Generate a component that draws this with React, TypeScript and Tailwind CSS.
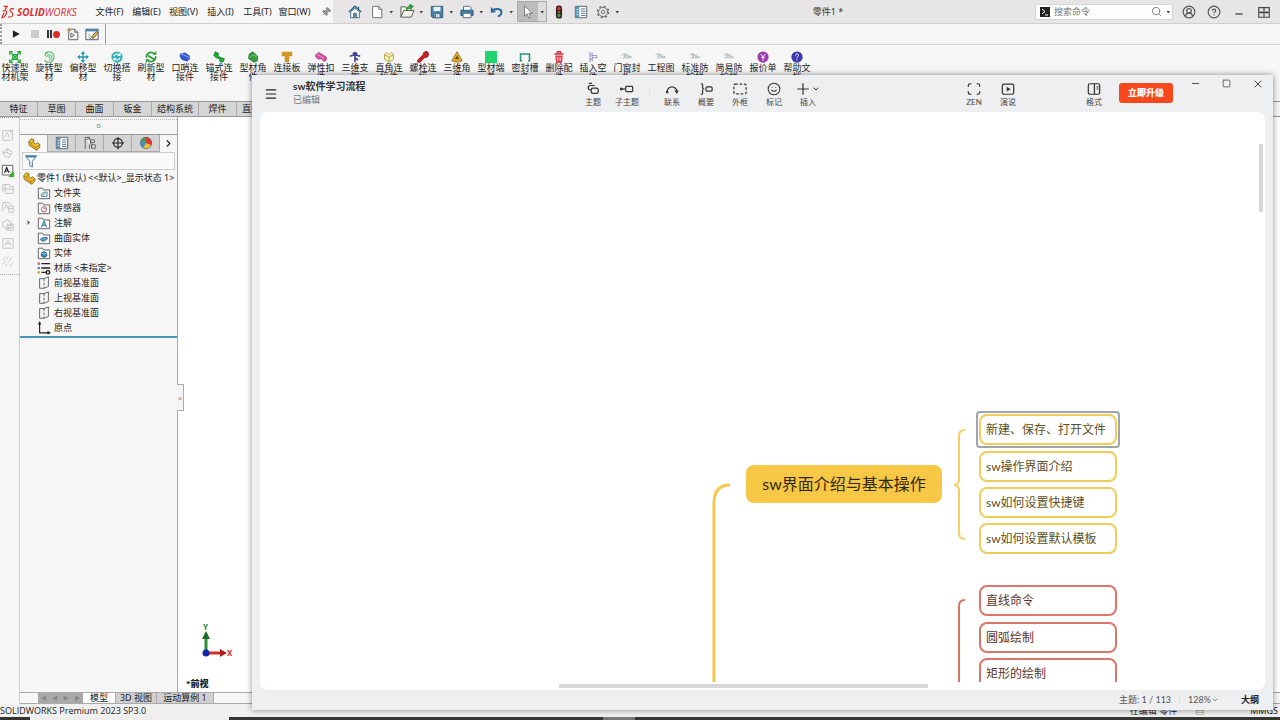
import type { ReactNode } from 'react';
import clsx from 'clsx';
import { ChevronDown, ChevronRight, CircleHelp, CircleUserRound, Menu, Minus, Pin, Search, Smile, Square, X } from 'lucide-react';

const menus = ['文件(F)', '编辑(E)', '视图(V)', '插入(I)', '工具(T)', '窗口(W)'];

const Ico = ({ children, className = 'size-[14px]' }: { children: ReactNode; className?: string }) => (
  <svg viewBox="0 0 16 16" fill="none" className={className} aria-hidden="true">{children}</svg>
);

const icons = {
  home: <Ico><path d="M1 8 8 1.5 15 8" stroke="#2b6488" strokeWidth="1.6" /><path d="M3 8v6.5h10V8L8 3.5Z" fill="#f7f9fa" stroke="#37627c" /><path d="M6.5 14V9.5h3V14" fill="#5d95b5" stroke="#37627c" /><path d="M12 2v3" stroke="#37627c" strokeWidth="1.5" /></Ico>,
  file: <Ico><path d="M3 1.5h7l3.5 3.5v9.5H3Z" fill="#fff" stroke="#666" /><path d="M10 1.5V5h3.5" stroke="#666" /></Ico>,
  open: <Ico className="size-[15px]"><path d="M1 14V3h5l1 2h5v3" fill="#f5f1de" stroke="#555" /><path d="m1 14 3-7h11l-3 7Z" fill="#f7f5e8" stroke="#555" /><path d="M7 7c0-3 2-4.5 5-4.5M10 .5l3.5 2-3 2.5" stroke="#2e9b3b" strokeWidth="1.8" /></Ico>,
  save: <Ico><path d="M1.5 1.5h13v13H3l-1.5-1.5Z" fill="#4384ad" stroke="#28516c" /><path d="M4 2h8v5H4Z" fill="#e9f1f5" /><path d="M4.5 10h7v4.5h-7Z" fill="#dbe3e8" stroke="#28516c" strokeWidth=".7" /><path d="M6 11v3" stroke="#28516c" strokeWidth="1.5" /></Ico>,
  print: <Ico><path d="M4 6V1.5h7L12.5 3v3" fill="#fff" stroke="#4b5b66" /><path d="M1 6h14v6H1Z" fill="#3f82aa" stroke="#2a5a78" /><path d="M3.5 9.5h9v5h-9Z" fill="#fff" stroke="#4b5b66" /></Ico>,
  undo: <Ico><path d="M3 6c5-3 11-1 10 3-.3 2-2 3.5-4 4" stroke="#2c6da0" strokeWidth="2.2" /><path d="M1 2v7l6-1Z" fill="#2c6da0" /></Ico>,
  cursor: <Ico><path d="M4 1v12l3-3 2 5 2-1-2-4.5h4Z" fill="#fff" stroke="#555" strokeWidth=".8" /></Ico>,
  traffic: <Ico><rect x="4.5" y=".5" width="7" height="15" rx="3" fill="#3a2222" /><circle cx="8" cy="4" r="2" fill="#d83b2c" /><circle cx="8" cy="8" r="1.5" fill="#8c6a24" /><circle cx="8" cy="12" r="2" fill="#37a544" /></Ico>,
  list: <Ico><path d="M1.5 1.5h13v13h-13Z" fill="#fff" stroke="#456" /><path d="M2 2h4v12H2Z" fill="#5593b5" /><path d="M3 5h2M3 8h2M3 11h2" stroke="#fff" /><path d="M8 4.5h5M8 7h5M8 9.5h5M8 12h5" stroke="#567" /></Ico>,
  gear: <Ico><circle cx="8" cy="8" r="5.2" stroke="#666" /><circle cx="8" cy="8" r="6.4" stroke="#666" strokeWidth="1.6" strokeDasharray="2.5 2.53" /><circle cx="8" cy="8" r="2" stroke="#666" /></Ico>,
  part: <Ico><path d="M2 5.5 5 2l3 1.5-.5 3L10 8l2-1.5L15 9l-1 3.5-3 2.5-8.500-5.500Z" fill="#f0bf2c" stroke="#876616" /><path d="m2 5.5 3 1.500.5 2L10 12l1 3M5 7l3-3.500M10 12l4.500-3" stroke="#876616" strokeWidth=".7" /></Ico>,
  config: <Ico><path d="M2.5 14.500v-13h5v13" stroke="#555" /><path d="m4 4 4-1 2 11M9 4.500h4v3H9ZM10 10h4v4h-4Z" fill="#eee" stroke="#555" /></Ico>,
  target: <Ico><circle cx="8" cy="8" r="5" stroke="#222" strokeWidth="1.3" /><path d="M8 1v14M1 8h14" stroke="#222" strokeWidth="1.3" /></Ico>,
  ball: <Ico><circle cx="8" cy="8" r="6.5" fill="#438dc5" /><path d="M8 8 2 5.5A6.5 6.5 0 0 1 8 1.5Z" fill="#3ba34a" /><path d="M8 8V1.5A6.5 6.5 0 0 1 14 10.5Z" fill="#d93530" /><path d="m8 8 6 2.5A6.5 6.5 0 0 1 5 13.8Z" fill="#efc434" /><circle cx="8" cy="8" r="6.5" stroke="#555" strokeWidth=".6" /></Ico>,
  filter: <Ico><path d="M1.5 2h13l-5 6.5V15l-3-2V8.5Z" fill="#f7fafb" stroke="#3c6b83" /><path d="M2 2h12l-1.5 2h-9Z" fill="#4284a7" /></Ico>,
  material: <Ico><path d="M5 3h10M5 8h10M5 13h5" stroke="#222" strokeWidth="1.5" /><circle cx="2" cy="3" r="1.5" fill="#b9707c" /><circle cx="2" cy="8" r="1.5" fill="#5978c4" /><circle cx="2" cy="13" r="1.5" fill="#d7a93b" /><circle cx="12.5" cy="13" r="2" stroke="#222" strokeWidth="1.7" /></Ico>,
  plane: <Ico><path d="M8 3H3v11h5M8 3l5-2v11l-5 2" stroke="#555" /><path d="M8 3v11" stroke="#555" strokeDasharray="3 1.500" /></Ico>,
  origin: <Ico><path d="M3 3v10.5h11" stroke="#222" strokeWidth="1.3" /><path d="M3 0 1 4h4ZM16 13.500l-4-2v4Z" fill="#222" /></Ico>,
  macroDoc: <Ico><path d="M3 2.5h7L13.5 6v8.5H3Z" fill="#f5f5f5" stroke="#555" /><path d="M10 2.5V6h3.5M5.5 7v5l4-2.5Z" stroke="#555" /><path d="m3.5 0 1 2.5 2.5 1-2.5 1-1 2.5-1-2.5L0 3.500l2.500-1Z" fill="#b69458" /></Ico>,
  macroEdit: <Ico><path d="M1 2.5h14v12H1Z" fill="#fff" stroke="#445" /><path d="M1 2.5h14V5H1Z" fill="#4485ad" /><path d="m4 8 5 5M4 11l3 3" stroke="#5a7188" /><path d="m8 13 .5-3L13 5l2 2-4.500 5Z" fill="#e4b258" stroke="#715427" /></Ico>,
};

// folders in the feature tree share a body and only differ in the badge
const FolderIcon = ({ children }: { children: ReactNode }) => (
  <Ico><path d="M1.5 14.5v-12h5l1 2h7v10Z" fill="#f7f7f7" stroke="#555" />{children}</Ico>
);

const tree = [
  { label: '文件夹', icon: <FolderIcon><path d="M5 12V9l3-2h3.5v5H5M6 11l4-3" stroke="#3b8c92" /></FolderIcon> },
  { label: '传感器', icon: <FolderIcon><circle cx="8" cy="9.5" r="3" stroke="#a04a55" /><path d="M8 9.500 9.500 8" stroke="#333" /></FolderIcon> },
  { label: '注解', icon: <FolderIcon><path d="m5 13 3-7 3 7M6 10.5h4" stroke="#2d81a0" strokeWidth="1.3" /></FolderIcon>, open: true },
  { label: '曲面实体', icon: <FolderIcon><path d="M4 10c2-4 3-1 5-3l3 1c-2 4-3 2-5 4Z" fill="#5aa5c8" stroke="#235f85" /></FolderIcon> },
  { label: '实体', icon: <FolderIcon><path d="m5 8 3-1.5L11 8v3.500L8 13l-3-1.500Z" fill="#3288b7" stroke="#17516e" /><path d="m5 8 3 1.500L11 8" stroke="#fff" strokeWidth=".7" /></FolderIcon> },
  { label: '材质 <未指定>', icon: icons.material },
  { label: '前视基准面', icon: icons.plane },
  { label: '上视基准面', icon: icons.plane },
  { label: '右视基准面', icon: icons.plane },
  { label: '原点', icon: icons.origin },
];

const sketchy = <path d="M1 6c3-5 4-2 3 1M4 4h3v3H4M8 7.5h6M2 9h12M5 5.5h6" stroke="#9aa8a5" strokeWidth=".9" />;

const ribbon = [
  { label: '快速型材机架', icon: <><path d="m2 2 12 12M14 2 2 14" stroke="#23ad3c" strokeWidth="1.5" /><path d="M1 5V1h4M11 1h4v4M1 11v4h4M11 15h4v-4M5 5h6v6H5Z" stroke="#23ad3c" strokeWidth="1.8" /></> },
  { label: '旋转型材', icon: <><path d="M3 3a7 7 0 1 1-1 9M3 3v4M3 3h4" stroke="#43ba5e" strokeWidth="1.4" /><path d="M5 8a3.5 3.5 0 1 1 3 4M8 6v3h2" stroke="#43ba5e" strokeWidth="1.3" /></> },
  { label: '偏移型材', icon: <><path d="M8 2v12M2 8h12" stroke="#2699b0" strokeWidth="1.8" /><path d="M8 0 5 4h6ZM8 16l-3-4h6ZM0 8l4-3v6ZM16 8l-4-3v6Z" fill="#2699b0" /></> },
  { label: '切换搭接', icon: <><circle cx="8" cy="8" r="7.5" fill="#35b5bb" /><path d="M4 7a4.5 4.5 0 0 1 8-1M12 9a4.5 4.5 0 0 1-8 1M12 3v3H9M4 13v-3h3" stroke="#fff" strokeWidth="1.5" /></> },
  { label: '刷新型材', icon: <><path d="M2 9a6 6 0 0 1 10-5.5M14 7A6 6 0 0 1 4 12.5M4 6l8 5" stroke="#279c35" strokeWidth="2.2" /><path d="M10 5h5V0ZM6 11H1v5Z" fill="#279c35" /></> },
  { label: '口哨连接件', icon: <><path d="M1 4 8 2l6 4 1 4-4 4-7-2-3-4Z" fill="#3556c9" /><path d="m2 4 6 2 6 3" stroke="#849af0" strokeWidth="1.5" /></> },
  { label: '锚式连接件', icon: <path d="m3 1 4 2v4l4 2 4 1-1 4-4 1-2-5-4-1-3-3Z" fill="#22ab37" stroke="#167726" /> },
  { label: '型材角件', icon: <><path d="m3 4 5-3 6 6v6l-5 2-7-5Z" fill="#2f9d40" stroke="#236c30" /><path d="m3 9 5-4 5 3" stroke="#91cc93" /></> },
  { label: '连接板', icon: <path d="M1 1h14v6h-4v8H5V7H1Z" fill="#cf9927" /> },
  { label: '弹性扣件', icon: <><path d="m1 5 4-3 10 6v4l-3 2-4-4-3 1-4-3Z" fill="#d855a6" stroke="#90386e" /><path d="m3 4 9 6" stroke="#f9a4d5" /></> },
  { label: '三维支架', icon: <path d="M8 2v13M1 7l7-2 7 2M5 4l3-2 3 2M8 9l4 3" stroke="#4a438d" strokeWidth="2.2" /> },
  { label: '直角连接件', icon: <><path d="m2 4 3-2 3 3 3-3 3 2v7l-6 4-6-4Z" fill="#f5edb6" stroke="#a99536" /><path d="m2 5 6 3 6-3M8 8v7" stroke="#a99536" /></> },
  { label: '螺栓连接', icon: <path d="m1 12 7-7 1-3 4-2 3 4-2 4-4 1-6 6-3 0Z" fill="#c81f2b" stroke="#7b131b" /> },
  { label: '三维角件', icon: <><path d="M8 1 15 13l-7 2-7-2Z" fill="#e3ad2b" stroke="#8a6317" /><path d="m8 6 3 5H5Z" fill="#6f5219" /></> },
  { label: '型材端盖', icon: <path d="M0 0h16v16H0Z" fill="#22d46f" /> },
  { label: '密封槽条', icon: <path d="M4 13H2V4h12v9h-2" stroke="#25917d" strokeWidth="2" /> },
  { label: '删除配件', icon: <><path d="M2 4h12M6 3V1h4v2" stroke="#ce3144" strokeWidth="2" /><path d="M3 6h10l-1 10H4Z" fill="#d94253" /><path d="M6.5 8v5M9.5 8v5" stroke="#fff" /></> },
  { label: '插入空件', icon: <path d="M4 1v14M7 2v12M7 6h6v3H7M4 5h3M4 11h3" stroke="#a79ac5" strokeWidth="1.5" /> },
  { label: '门窗封板', icon: sketchy },
  { label: '工程图', icon: sketchy },
  { label: '标准防护栏', icon: sketchy },
  { label: '简易防护栏', icon: sketchy },
  { label: '报价单', icon: <><circle cx="8" cy="8" r="7.5" fill="#9d3cae" /><path d="m5 4 3 4 3-4M8 8v5M5.5 8.5h5" stroke="#fff" strokeWidth="1.2" /></> },
  { label: '帮助文档', icon: <><circle cx="8" cy="8" r="7.5" fill="#3a38ad" /><path d="M6 6c0-3 4.5-2.500 4 0-.2 1.300-2 1.500-2 3.500M8 11v1.500" stroke="#fff" strokeWidth="1.3" /></> },
];

const sideIcons = [
  <><path d="M2 3h11v11H2ZM4 11l3-6 3 6" /><path d="m10 5 4-3" /></>,
  <><path d="m2 7 5-4 6 4-4 6-5-1ZM7 3v5l5 2M2 7l5 1" /></>,
  null,
  <><path d="M2 12V3h8M5 3v9M2 8h12M9 5h5v8H5" /></>,
  <><path d="M2 13V3h7l3 3M4 10l2-5 2 5M9 7h5v7H9ZM9 10h5" /></>,
  <><path d="m2 5 5-3 5 3v5l-5 3-5-3ZM7 7h7v7H7Z" /><circle cx="10" cy="10" r="2" /></>,
  <><path d="M2 3h12v11H2ZM4 11l4-6 4 6M5 9h6" /></>,
  <><path d="m2 12 7-10M5 14l8-11M10 14l4-5M2 7l3-4" strokeDasharray="3 1" /></>,
];

const mindTools = [
  { label: '主题', icon: <><path d="M10 4H5a2.5 2.5 0 0 0 0 5h1" /><rect x="6" y="7" width="8" height="6" rx="2" /><path d="M3 1.5h4" /></> },
  { label: '子主题', icon: <><circle cx="1.500" cy="8" r="1" fill="currentColor" /><path d="M2 8h4" /><rect x="6.5" y="5" width="8" height="6" rx="1" /></> },
];
const mindTools2 = [
  { label: '联系', icon: <><path d="M2.500 11a5.500 5.500 0 1 1 11 0" /><circle cx="2.500" cy="11.500" r=".8" fill="currentColor" /><path d="m12 10.500 1.500 2 1-2Z" fill="currentColor" /></> },
  { label: '概要', icon: <><path d="M2 2c3 0 2 1 2 4 0 1.5 1 2 2 2-1 0-2 .5-2 2 0 3 1 4-2 4" /><rect x="8" y="5.5" width="7" height="5" rx="1.5" /></> },
  { label: '外框', icon: <rect x="1" y="2.5" width="14" height="11" rx="1.5" strokeDasharray="3 2" /> },
];
const viewTools = [
  { label: 'ZEN', icon: <path d="M1.5 5.5V4a2 2 0 0 1 2-2H5M11 2h1.5a2 2 0 0 1 2 2v1.5M14.5 10.5V12a2 2 0 0 1-2 2H11M5 14H3.5a2 2 0 0 1-2-2v-1.5" /> },
  { label: '演说', icon: <><rect x="1.5" y="2.5" width="13" height="11.5" rx="2" /><path d="m6.5 5.5 4.5 2.7-4.5 2.7Z" fill="currentColor" stroke="none" /></> },
];

const yellowTopics = [
  { text: '新建、保存、打开文件', pos: 'top-[302px]', selected: true },
  { text: 'sw操作界面介绍', pos: 'top-[339px]' },
  { text: 'sw如何设置快捷键', pos: 'top-[375px]' },
  { text: 'sw如何设置默认模板', pos: 'top-[411px]' },
];
const redTopics = [
  { text: '直线命令', pos: 'top-[473px]' },
  { text: '圆弧绘制', pos: 'top-[510px]' },
  { text: '矩形的绘制', pos: 'top-[546px]' },
];

function Caret() {
  return <svg viewBox="0 0 8 8" className="size-[8px] shrink-0" aria-hidden="true"><path d="M2.5 3H6L4.250 5.500Z" fill="#444" /></svg>;
}

function TopButton({ icon, label, caret }: { icon: ReactNode; label: string; caret?: boolean }) {
  return (
    <button aria-label={label} className="flex items-center">
      <span className="flex w-5 justify-center">{icon}</span>
      {caret && <Caret />}
    </button>
  );
}

function MindTool({ label, children }: { label: string; children: ReactNode }) {
  return (
    <button className="flex w-[34px] flex-col items-center gap-px text-[8px] leading-[10px] text-[#444]">
      <span className="flex h-[14px] items-center justify-center text-[#333]">{children}</span>
      {label}
    </button>
  );
}

function LineIcon({ children }: { children: ReactNode }) {
  return <svg viewBox="0 0 16 16" fill="none" stroke="currentColor" strokeWidth="1.4" className="size-[14px]" aria-hidden="true">{children}</svg>;
}

function TitleBar() {
  return (
    <header className="flex h-6 shrink-0 border-b border-[#cfcfcf] bg-[#e7e5e6]">
      <div className="flex w-[333px] shrink-0 items-center bg-[#f6f6f6]">
        <div className="flex w-[91px] items-center gap-[2px] pl-px text-[#d5312f]">
          <svg viewBox="0 0 16 16" fill="none" stroke="currentColor" strokeWidth="1.4" className="size-[14px]" aria-hidden="true">
            <path d="M3 1.5h4l-2.500 4M2 7c5-2 5 1 3.500 4C4.500 13.500 3 14.500 1 14.500L3.500 9M15 4.500c-3-1-5 0-4.500 2 .5 2 4 2.500 3 5-.6 2-3 2.500-5.500 2" />
          </svg>
          <span className="font-['Open_Sans'] text-[10px] italic leading-4"><b>SOLID</b>WORKS</span>
        </div>
        <nav className="flex">
          {menus.map(m => <button key={m} className="w-[37px] whitespace-nowrap text-center text-[9px] leading-4">{m}</button>)}
        </nav>
        <button aria-label="固定" className="ml-2 text-[#777]"><Pin size={10} className="rotate-45" fill="#999" /></button>
      </div>
      <div className="ml-3 flex items-center gap-[2px]">
        <TopButton icon={icons.home} label="主页" />
        <TopButton icon={icons.file} label="新建" caret />
        <TopButton icon={icons.open} label="打开" caret />
        <TopButton icon={icons.save} label="保存" caret />
        <TopButton icon={icons.print} label="打印" caret />
        <TopButton icon={icons.undo} label="撤销" caret />
        <button aria-label="选择" className="flex h-[21px] items-center border border-[#aaa] bg-[#dcdcdc]">
          <span className="flex h-full w-5 items-center justify-center bg-[#bcbcbc]">{icons.cursor}</span>
          <Caret />
        </button>
        <TopButton icon={icons.traffic} label="重建模型" />
        <TopButton icon={icons.list} label="文件属性" />
        <TopButton icon={icons.gear} label="选项" caret />
      </div>
      <h1 className="flex flex-1 items-center justify-center text-[9px] leading-4 text-[#333]">零件1 *</h1>
      <div className="flex items-center">
        <label className="mr-[3px] flex h-4 w-[138px] items-center border border-[#d5d5d5] bg-white pl-1">
          <svg viewBox="0 0 10 10" className="size-[10px] shrink-0" aria-hidden="true"><path d="M0 0h10v10H0Z" fill="#222" /><path d="m2 2 3 2.5L2 7M5 8h3" stroke="#fff" fill="none" /></svg>
          <input aria-label="搜索命令" placeholder="搜索命令" className="ml-1 w-0 min-w-0 flex-1 text-[9px] outline-none placeholder:text-[#777]" />
          <Search size={11} className="mr-[2px] shrink-0 text-[#777]" />
          <Caret />
        </label>
        <div className="flex pr-1 text-[#555]">
          <button aria-label="登录" className="flex w-[25px] justify-center"><CircleUserRound size={14} strokeWidth={2} /></button>
          <button aria-label="帮助" className="flex w-[25px] justify-center"><CircleHelp size={14} strokeWidth={2} /></button>
          <button aria-label="最小化" className="flex w-[25px] items-end justify-center"><Minus size={10} strokeWidth={4} /></button>
          <button aria-label="还原" className="flex w-[25px] justify-center"><Ico><path d="M2 3h12v11H2ZM8 3v11M2 8.5h12M5 7v3M11 7v3" stroke="#444" strokeWidth="1.3" /></Ico></button>
        </div>
      </div>
    </header>
  );
}

function FeaturePanel() {
  return (
    <aside className="relative flex w-[158px] shrink-0 flex-col border-r border-[#aaa] bg-[#f6f6f6]">
      <div className="mt-[2px] h-[15px] border-t border-dotted border-[#bbb] text-center text-[7px] leading-3 text-[#777]">o</div>
      <div className="flex h-[18px] border-t border-[#999]">
        {[icons.part, icons.list, icons.config, icons.target, icons.ball].map((icon, i) => (
          <button key={i} aria-label="管理器选项卡" className={clsx('flex w-7 items-center justify-center border-r border-[#aaa]', i === 0 ? 'bg-[#f8f8f8]' : 'border-b bg-[#d4d4d4]')}>{icon}</button>
        ))}
        <button aria-label="更多" className="flex flex-1 items-center justify-center"><ChevronRight size={11} strokeWidth={2.5} /></button>
      </div>
      <label className="mx-[2px] flex h-[18px] items-center border border-[#ccc] bg-[#fafafa] pl-px">
        {icons.filter}
        <input aria-label="过滤" className="w-0 flex-1 text-[9px] outline-none" />
      </label>
      <div className="flex h-[15px] items-center gap-px whitespace-nowrap pl-[2px] text-[9px]">
        {icons.part}<span>零件1 (默认) &lt;&lt;默认&gt;_显示状态 1&gt;</span>
      </div>
      <ul className="border-b-2 border-[#4e94b8] pb-px">
        {tree.map(t => (
          <li key={t.label} className="flex h-[15px] items-center text-[9px] leading-[15px]">
            <span className="flex w-[17px] justify-center">{t.open && <ChevronRight size={7} fill="#555" />}</span>
            {t.icon}
            <span className="ml-[3px]">{t.label}</span>
          </li>
        ))}
      </ul>
      <button aria-label="折叠面板" className="absolute -right-[7px] top-[267px] h-[27px] w-[7px] border border-l-0 border-[#aaa] bg-[#f4f4f4] text-[6px] leading-none text-[#777]">o</button>
    </aside>
  );
}

function Topic({ text, pos, tone, selected }: { text: string; pos: string; tone: string; selected?: boolean }) {
  return (
    <button className={clsx('absolute left-[719px] h-[31px] w-[138px] whitespace-nowrap rounded-[8px] border-2 bg-white pl-[5px] text-left text-[12px] leading-[26px]', pos, tone)}>
      {selected && <span className="absolute -inset-[5px] rounded-[4px] border-2 border-[#a3a3ab]" />}
      {text}
    </button>
  );
}

function MindMapWindow() {
  return (
    <section className="absolute bottom-[10px] left-[252px] right-[7px] top-[75px] flex flex-col bg-[#eeeff1] font-[Lato,'Noto_Sans_CJK_SC',sans-serif] shadow-[0_0_6px_rgba(0,0,0,0.45)]">
      <header className="flex h-[37px] shrink-0">
        <button aria-label="菜单" className="flex w-[38px] items-center justify-center"><Menu size={14} /></button>
        <div className="w-[286px] pl-[3px] pt-1">
          <h2 className="text-[10px] font-bold leading-[14px] text-[#333]">sw软件学习流程</h2>
          <p className="text-[9px] leading-[14px] text-[#777]">已编辑</p>
        </div>
        <div className="flex pt-[7px]">
          {mindTools.map(t => <MindTool key={t.label} label={t.label}><LineIcon>{t.icon}</LineIcon></MindTool>)}
          <span className="mx-[5px] mt-1 h-3 w-px bg-[#e2e2e4]" />
          {mindTools2.map(t => <MindTool key={t.label} label={t.label}><LineIcon>{t.icon}</LineIcon></MindTool>)}
          <MindTool label="标记"><Smile size={14} strokeWidth={1.8} /></MindTool>
          <MindTool label="插入"><LineIcon><path d="M8 1.5v13M1.5 8h13" /></LineIcon><ChevronDown size={8} strokeWidth={3} className="ml-[2px]" /></MindTool>
        </div>
        <div className="ml-auto flex pt-[7px]">
          {viewTools.map(t => <MindTool key={t.label} label={t.label}><LineIcon>{t.icon}</LineIcon></MindTool>)}
        </div>
        <div className="ml-[52px] pt-[7px]">
          <MindTool label="格式"><LineIcon><rect x="1.5" y="2" width="13" height="12" rx="2" /><path d="M8.5 2v12M11 5.5h2M11 8h2" /></LineIcon></MindTool>
        </div>
        <button className="ml-2 mr-[7px] mt-2 h-5 w-[54px] rounded-[3px] bg-[#f5481d] text-[9px] font-black text-white">立即升级</button>
        <div className="flex h-[17px] text-[#444]">
          <button aria-label="最小化" className="flex w-[31px] items-center justify-center"><Minus size={11} /></button>
          <button aria-label="最大化" className="flex w-[31px] items-center justify-center"><Square size={9} /></button>
          <button aria-label="关闭" className="flex w-[31px] items-center justify-center"><X size={12} /></button>
        </div>
      </header>
      <div className="relative mx-2 flex-1 overflow-hidden rounded-lg bg-white">
        <div className="absolute inset-x-0 bottom-2 top-0 overflow-hidden">
          <svg className="absolute inset-0 size-full" fill="none" aria-hidden="true">
            <path d="M470 373c-11 0-16 7-16 18v400" stroke="#f5c74b" strokeWidth="3" />
            <path d="M705 318c-4 0-6 2-6 6v43c0 4-2 6-5 6 3 0 5 2 5 6v42c0 4 2 6 6 6" stroke="#f2cf63" strokeWidth="2" />
            <path d="M705 488c-4 0-6 2-6 6v400" stroke="#d97468" strokeWidth="2" />
          </svg>
          <button className="absolute left-[486px] top-[353px] h-[38px] w-[196px] whitespace-nowrap rounded-[8px] bg-[#f7c846] text-[16px] text-[#33270a]">sw界面介绍与基本操作</button>
          {yellowTopics.map(t => <Topic key={t.text} {...t} tone="border-[#f0cd5b] text-[#5c5022]" />)}
          {redTopics.map(t => <Topic key={t.text} {...t} tone="border-[#dc766b] text-[#583430]" />)}
        </div>
        <div className="absolute right-[2px] top-8 h-[68px] w-1 bg-[#d8d8d8]" />
        <div className="absolute bottom-[2px] left-[299px] h-1 w-[369px] bg-[#d8d8d8]" />
      </div>
      <footer className="flex h-5 shrink-0 items-center justify-end pr-[14px] text-[9px] text-[#555]">
        <span>主题: 1 / 113</span>
        <span className="mx-2 h-2 w-px bg-[#dedee0]" />
        <button className="flex items-center">128%<ChevronDown size={8} /></button>
        <button className="ml-[22px] font-bold text-[#222]">大纲</button>
      </footer>
    </section>
  );
}

export default function App() {
  return (
    <div className="relative flex h-screen flex-col overflow-hidden bg-[#f6f6f6] font-['Noto_Sans','Noto_Sans_CJK_SC',sans-serif] text-[#222]">
      <TitleBar />
      <div className="flex h-[21px] shrink-0 border-b border-[#d6d6d6]">
        <div className="w-[2px] border-l-2 border-dotted border-[#999]" />
        <div className="flex items-center border-r border-[#999] px-1">
          <button aria-label="运行宏" className="flex w-[19px] justify-center"><Ico className="size-[10px]"><path d="M3 2v12l11-6Z" fill="#222" /></Ico></button>
          <button aria-label="停止宏" className="flex w-[19px] justify-center"><span className="size-2 bg-[#ccc]" /></button>
          <button aria-label="录制宏" className="flex w-[19px] items-center justify-center gap-px"><span className="h-2 w-[5px] border-x-2 border-[#333]" /><span className="size-[7px] rounded-full bg-[#d92a1c]" /></button>
          <button aria-label="新建宏" className="flex w-[19px] justify-center">{icons.macroDoc}</button>
          <button aria-label="编辑宏" className="flex w-[19px] justify-center">{icons.macroEdit}</button>
        </div>
      </div>
      <div className="-ml-0.5 flex h-14 shrink-0 pt-[6px]">
        {ribbon.map(r => (
          <button key={r.label} className="flex w-[34px] shrink-0 flex-col items-center text-[9px] leading-[9px]">
            <Ico className="size-[12px] shrink-0">{r.icon}</Ico>
            <span className="w-[29px] break-all">{r.label}</span>
          </button>
        ))}
      </div>
      <nav className="flex h-4 shrink-0 border-y border-[#999]">
        {['特征', '草图', '曲面', '钣金', '结构系统', '焊件', '直接编辑'].map(t => (
          <button key={t} className={clsx('border-r border-[#aaa] bg-[#d5d5d5] text-[9px] leading-3', t.length > 2 ? 'w-[47px]' : 'w-[38px]')}>{t}</button>
        ))}
      </nav>
      <main className="flex min-h-0 flex-1">
        <div className="w-5 shrink-0 border-r border-[#ccc]">
          <div className="border-b border-t border-dotted border-b-[#aaa] border-t-[#999] pb-1 pt-2">
            {sideIcons.map((icon, i) => (
              <button key={i} aria-label="注解工具" className="flex h-[18px] w-4 items-center justify-center">
                {icon ? <Ico><g stroke="#bfbfbf">{icon}</g></Ico> : <Ico><path d="M1.5 1.5h12v11h-12Z" fill="#fff" stroke="#555" /><path d="m4 10 2.5-6L9 10M5 8h3" stroke="#222" strokeWidth="1.3" /><path d="m9 8 4 4M14.5 9v5.5H9Z" fill="#39a52c" stroke="#39a52c" /></Ico>}
              </button>
            ))}
          </div>
        </div>
        <div className="flex min-w-0 flex-1 flex-col">
          <div className="flex min-h-0 flex-1">
            <FeaturePanel />
            <div className="flex flex-1 flex-col justify-end bg-white pl-2">
              <svg viewBox="0 0 36 36" className="ml-3 size-9" fill="none" aria-label="坐标轴">
                <path d="M8 29V10" stroke="#2d8a38" strokeWidth="3" /><path d="m8 7-4 8h8Z" fill="#1c6b28" />
                <path d="M8 29h16" stroke="#cf2c2c" strokeWidth="3" /><path d="m29 29-7-4v8Z" fill="#a91d1d" />
                <circle cx="8" cy="29" r="3.5" fill="#1522a5" />
                <text x="5" y="6" fontSize="8" fontWeight="bold" fill="#2d8a38">Y</text>
                <text x="29" y="32" fontSize="8" fontWeight="bold" fill="#cf2c2c">X</text>
              </svg>
              <p className="mt-4 font-['Liberation_Serif','Noto_Sans_CJK_SC',serif] text-[9px] font-black leading-4">*前视</p>
            </div>
          </div>
          <div className="flex h-3 shrink-0 border-y border-[#aaa] pl-[18px] text-[9px] leading-[10px]">
            <div className="flex w-[45px] items-center justify-around bg-[#a9a9a9] text-[6px] text-[#888]"><span>◀</span><span>◀</span><span>▶</span><span>▶</span></div>
            <button className="w-8 bg-white">模型</button>
            <button className="w-[42px] border-x border-[#aaa] bg-[#d0d0d0]">3D 视图</button>
            <button className="w-[57px] border-r border-[#aaa] bg-[#d0d0d0]">运动算例 1</button>
          </div>
        </div>
      </main>
      <footer className="flex h-[13px] shrink-0 items-center bg-[#f0f0f0] text-[9px] leading-[13px]">
        <span className="font-['Open_Sans']">SOLIDWORKS Premium 2023 SP3.0</span>
        <span className="ml-auto">在编辑 零件</span>
        <span className="ml-[18px]">▤</span>
        <span className="ml-[46px] pr-[2px]">MMGS</span>
      </footer>
      <div className="flex h-[3px] shrink-0 bg-[#343431]">
        <span className="ml-[30px] w-[199px] bg-[#eeeeec]" />
        <span className="ml-[374px] w-8 bg-[#777]" />
      </div>
      <MindMapWindow />
    </div>
  );
}
